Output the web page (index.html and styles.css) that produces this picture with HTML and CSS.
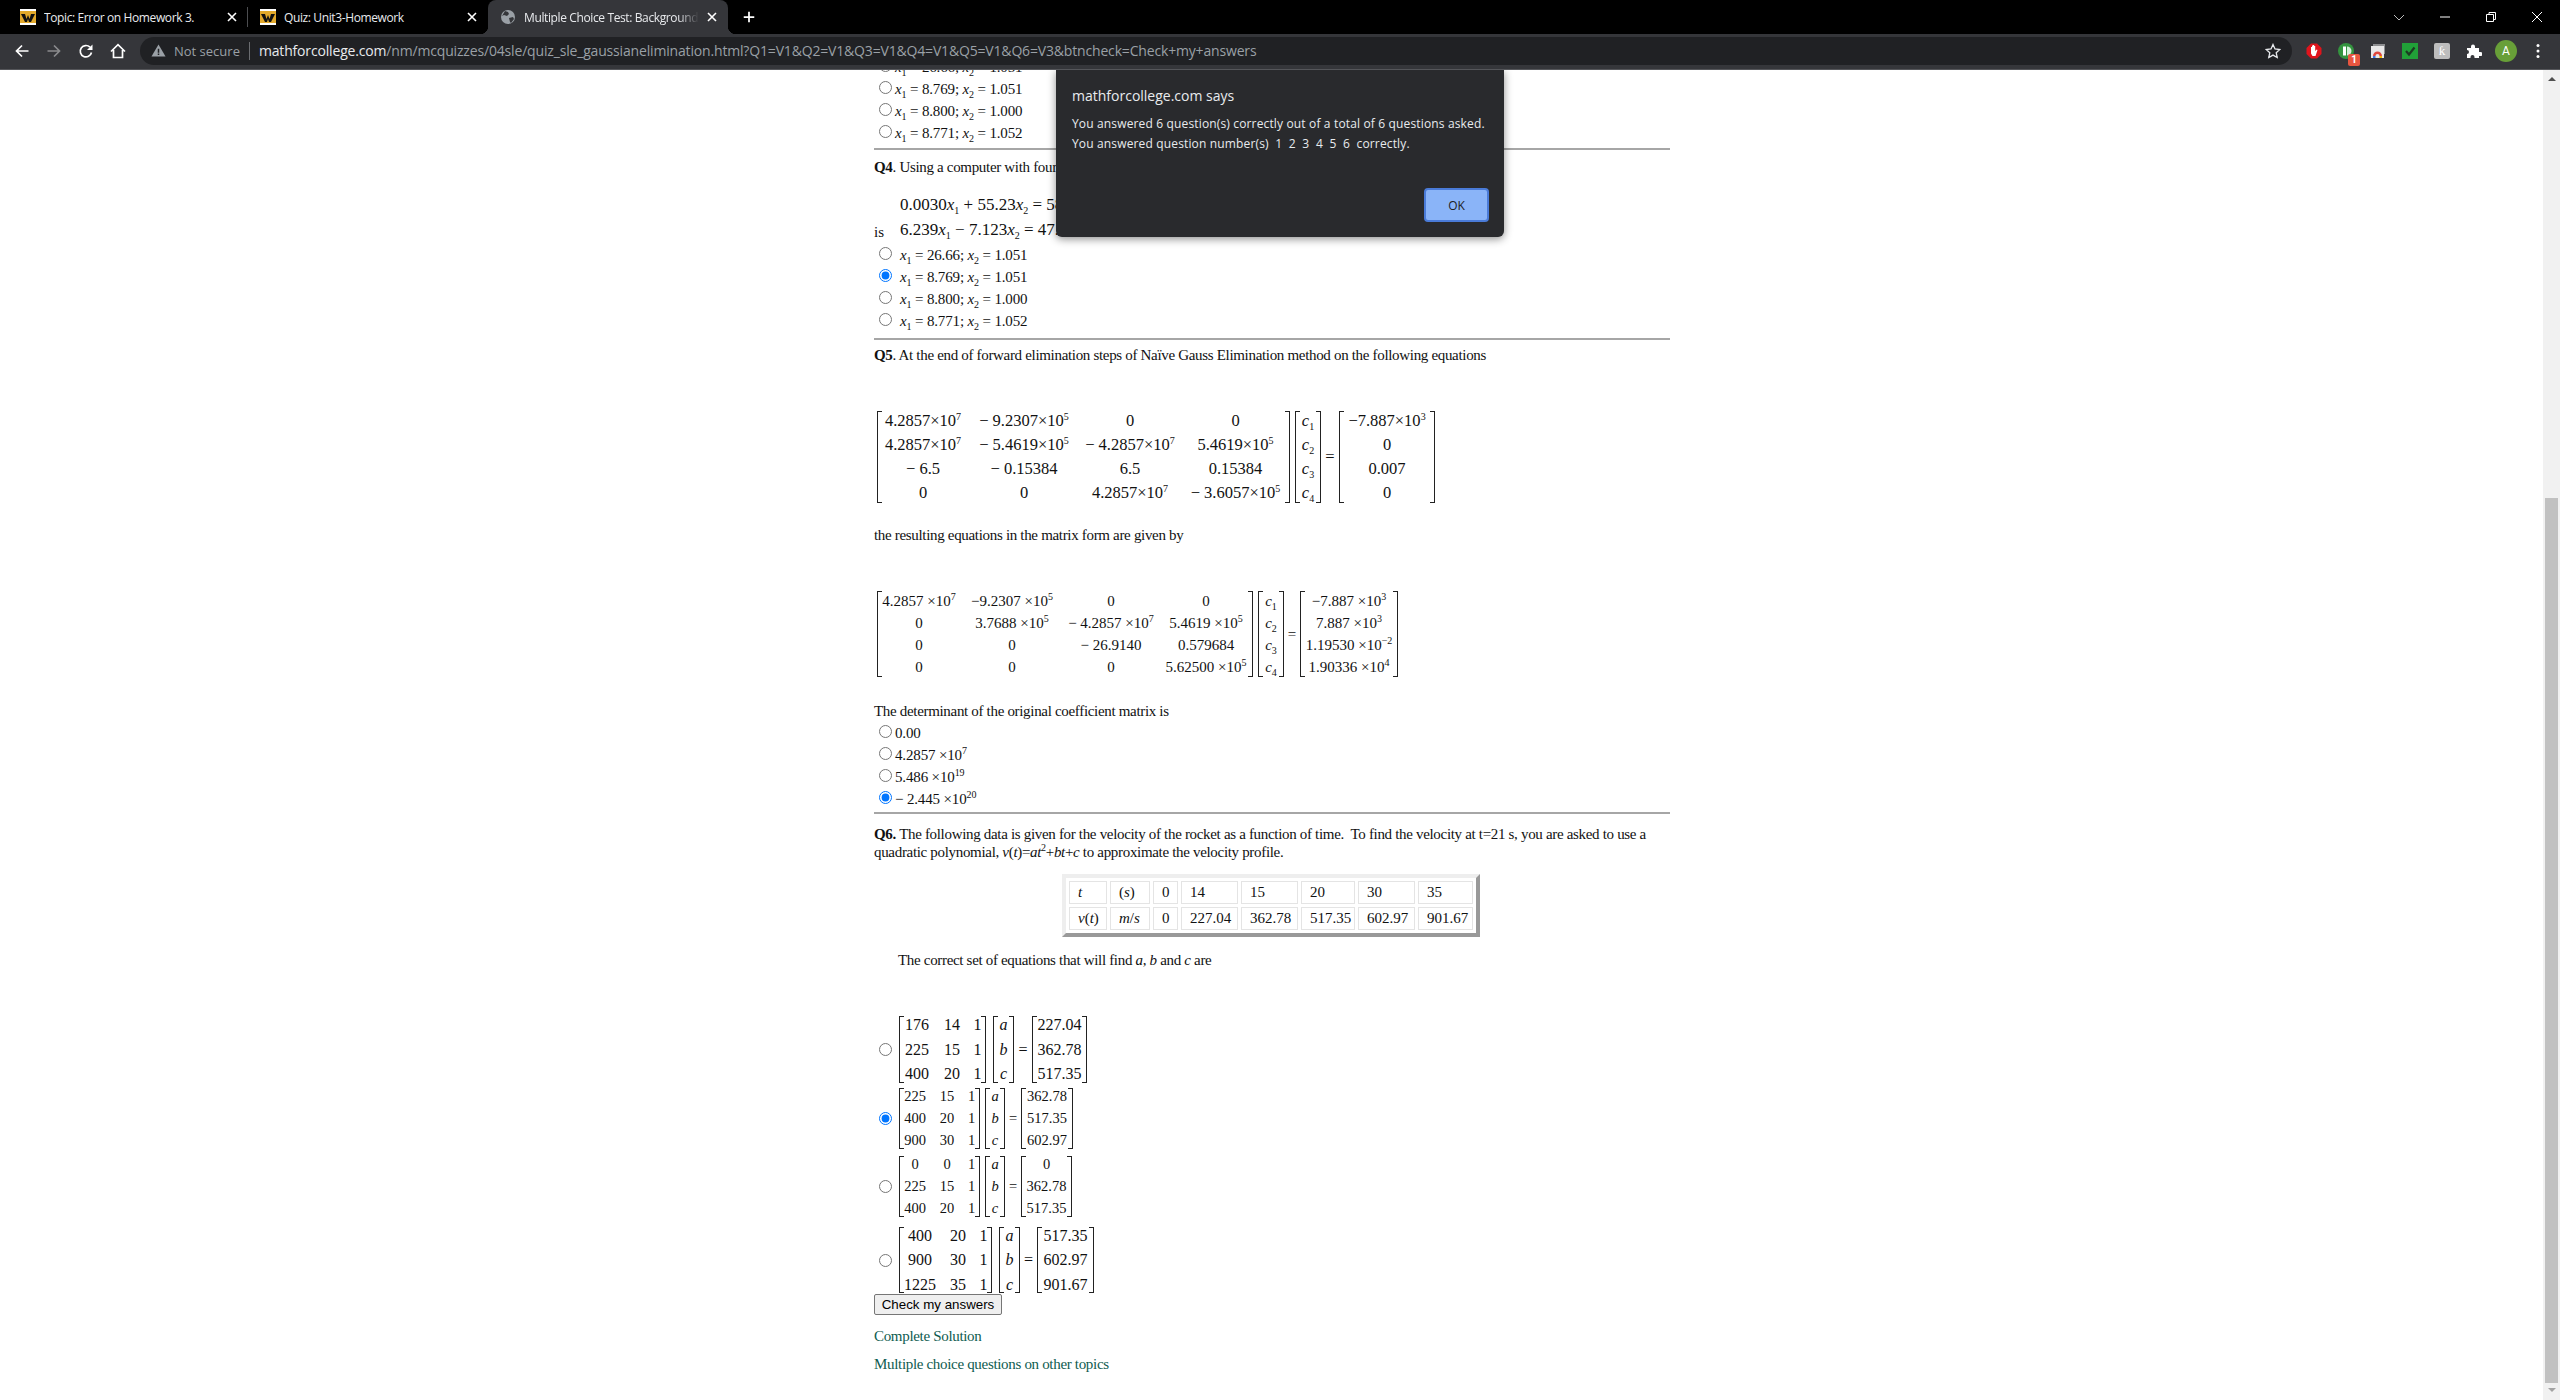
FILE: index.html
```html
<!DOCTYPE html>
<html lang="en">
<head>
    <meta charset="UTF-8">
    <title>Multiple Choice Test: Background</title>
    <link rel="stylesheet" href="styles.css">
</head>
<body>
    <div class="tabstrip">
        <div class="tab tab-sep">
            <svg class="favicon" viewBox="0 0 16 16"><rect width="16" height="16" fill="#fff"/><rect y="2" width="16" height="12" fill="#e2a92b"/><path d="M1 5h4l1.5 5L8 6l1.5 4L11 5h4l-4 8H9L8 10l-1 3H5z" fill="#111"/></svg>
            <span class="tab-title">Topic: Error on Homework 3.</span>
            <svg class="tab-x" viewBox="0 0 16 16"><path d="M4 4l8 8M12 4l-8 8" stroke="#fff" stroke-width="1.6"/></svg>
        </div>
        <div class="tab">
            <svg class="favicon" viewBox="0 0 16 16"><rect width="16" height="16" fill="#fff"/><rect y="2" width="16" height="12" fill="#e2a92b"/><path d="M1 5h4l1.5 5L8 6l1.5 4L11 5h4l-4 8H9L8 10l-1 3H5z" fill="#111"/></svg>
            <span class="tab-title">Quiz: Unit3-Homework</span>
            <svg class="tab-x" viewBox="0 0 16 16"><path d="M4 4l8 8M12 4l-8 8" stroke="#fff" stroke-width="1.6"/></svg>
        </div>
        <div class="tab tab-active">
            <svg class="favicon" viewBox="0 0 16 16"><circle cx="8" cy="8" r="7" fill="#9aa0a6"/><path d="M5 2l3 1 1 2-2 2-3-1-2 1zM9 9l4-1 1 2-3 4-1-1z" fill="#35363a"/></svg>
            <span class="tab-title tab-fade">Multiple Choice Test: Background of the method</span>
            <svg class="tab-x" viewBox="0 0 16 16"><path d="M4 4l8 8M12 4l-8 8" stroke="#fff" stroke-width="1.6"/></svg>
        </div>
        <svg class="new-tab" viewBox="0 0 16 16"><path d="M8 2v12M2 8h12" stroke="#fff" stroke-width="2"/></svg>
        <div class="win-controls">
            <svg class="win-btn" viewBox="0 0 16 16"><path d="M3 6l5 5 5-5" fill="none" stroke="#bbb" stroke-width="1"/></svg>
            <svg class="win-btn" viewBox="0 0 16 16"><path d="M3 8h10" stroke="#fff" stroke-width="1"/></svg>
            <svg class="win-btn" viewBox="0 0 16 16"><path d="M3.5 5.500h7v7h-7zM6 5.500V3.500h6.500v7h-2" fill="none" stroke="#fff" stroke-width="1"/></svg>
            <svg class="win-btn" viewBox="0 0 16 16"><path d="M3 3l10 10M13 3L3 13" stroke="#fff" stroke-width="1"/></svg>
        </div>
    </div>

    <div class="toolbar">
        <svg class="tool" viewBox="0 0 16 16"><path d="M14.500 8H2.500M8 2.500L2.500 8 8 13.500" fill="none" stroke="#fff" stroke-width="1.700"/></svg>
        <svg class="tool" viewBox="0 0 16 16"><path d="M1.500 8h12M8 2.500L13.500 8 8 13.500" fill="none" stroke="#8a8b8d" stroke-width="1.700"/></svg>
        <svg class="tool" viewBox="0 0 16 16"><path d="M13.500 9.500A5.700 5.700 0 1 1 12 4.200" fill="none" stroke="#fff" stroke-width="1.700"/><path d="M14.500 1.500v5.500H9z" fill="#fff"/></svg>
        <svg class="tool" viewBox="0 0 16 16"><path d="M1 8.500L8 1.700l7 6.800M3.500 7v7.500h9V7" fill="none" stroke="#fff" stroke-width="1.700"/></svg>
        <div class="omnibox">
            <svg class="omni-warn" viewBox="0 0 16 16"><path d="M8 1.500L15.500 14.500H.5z" fill="#9aa0a6"/><path d="M7.200 6h1.600v4.500H7.200zM7.200 11.300h1.600v1.600H7.200z" fill="#202124"/></svg>
            <span class="omni-note">Not secure</span>
            <span class="omni-sep"></span>
            <span class="omni-url"><b class="omni-host">mathforcollege.com</b>/nm/mcquizzes/04sle/quiz_sle_gaussianelimination.html?Q1=V1&amp;Q2=V1&amp;Q3=V1&amp;Q4=V1&amp;Q5=V1&amp;Q6=V3&amp;btncheck=Check+my+answers</span>
            <svg class="omni-star" viewBox="0 0 16 16"><path d="M8 1.500l2 4.500 4.800.5-3.600 3.200 1 4.800L8 12.100l-4.200 2.400 1-4.800L1.200 6.500 6 6z" fill="none" stroke="#e8eaed" stroke-width="1.300"/></svg>
        </div>
        <div class="ext-row">
            <svg class="ext" viewBox="0 0 16 16"><path d="M5 .5h6L15.500 5v6L11 15.500H5L.5 11V5z" fill="#e0141c"/><path d="M5 7V4h1v3-4.500h1V7 2h1.200v5-4h1v5l1.500-1.500.8.600L9.500 13H6.500L5 10.500z" fill="#fff"/></svg>
            <span class="ext ext-badged">
                <svg class="ext" viewBox="0 0 16 16"><circle cx="8" cy="8" r="8" fill="#34943f"/><path d="M5 3.500h3v9H5z" fill="#fff"/><path d="M9 3.500a4.500 4.500 0 0 1 0 9z" fill="#d5eed8"/></svg>
                <span class="badge">1</span>
            </span>
            <svg class="ext" viewBox="0 0 16 16"><rect x="3" y="1" width="12" height="10" fill="#8d8e90"/><rect x="1" y="3" width="13" height="12" fill="#e8e8e8"/><path d="M3 13a4.500 4.500 0 0 1 9 0H9.500a2 2 0 0 0-4 0z" fill="#e0483c"/><path d="M3 13h2.500v2H3z" fill="#3b78e7"/><path d="M9.500 13H12v2H9.500z" fill="#f4b400"/></svg>
            <svg class="ext" viewBox="0 0 16 16"><rect width="16" height="16" fill="#21a038"/><path d="M4 8l3 3.500L12.500 4.500" fill="none" stroke="#1c3b22" stroke-width="2.200"/></svg>
            <span class="ext ext-r">ƙ</span>
            <svg class="ext" viewBox="0 0 16 16"><path d="M1 5h4V3.500a2 2 0 0 1 4 0V5h4v4h1.500a2 2 0 0 1 0 4H13v2H8.500v-1a2 2 0 0 0-4 0v1H1v-4a2 2 0 0 0 0-4z" fill="#fff"/></svg>
            <span class="avatar">A</span>
            <svg class="ext" viewBox="0 0 16 16"><circle cx="8" cy="2.500" r="1.500" fill="#fff"/><circle cx="8" cy="8" r="1.500" fill="#fff"/><circle cx="8" cy="13.500" r="1.500" fill="#fff"/></svg>
        </div>
    </div>

    <div class="viewport">
        <div class="page">
            <div class="doc">
                <div class="opt opt-narrow"><input type="radio" name="q3"><span class="ans"><i>x</i><sub>1</sub> = 26.66; <i>x</i><sub>2</sub> = 1.051</span></div>
                <div class="opt opt-narrow"><input type="radio" name="q3"><span class="ans"><i>x</i><sub>1</sub> = 8.769; <i>x</i><sub>2</sub> = 1.051</span></div>
                <div class="opt opt-narrow"><input type="radio" name="q3"><span class="ans"><i>x</i><sub>1</sub> = 8.800; <i>x</i><sub>2</sub> = 1.000</span></div>
                <div class="opt opt-narrow"><input type="radio" name="q3"><span class="ans"><i>x</i><sub>1</sub> = 8.771; <i>x</i><sub>2</sub> = 1.052</span></div>
                <hr class="rule rule-q4">

                <p class="line q4-head"><b>Q4</b>. Using a computer with four significant digits with chopping, the Naïve Gauss elimination solution to</p>
                <div class="q4-system">
                    <span class="is">is</span>
                    <div class="sys">
                        <div class="sys-row">0.0030<i>x</i><sub>1</sub> + 55.23<i>x</i><sub>2</sub> = 58.12</div>
                        <div class="sys-row">6.239<i>x</i><sub>1</sub> − 7.123<i>x</i><sub>2</sub> = 47.23</div>
                    </div>
                </div>
                <div class="opts-q4">
                    <div class="opt"><input type="radio" name="q4"><span class="ans"><i>x</i><sub>1</sub> = 26.66; <i>x</i><sub>2</sub> = 1.051</span></div>
                    <div class="opt"><input type="radio" name="q4" checked><span class="ans"><i>x</i><sub>1</sub> = 8.769; <i>x</i><sub>2</sub> = 1.051</span></div>
                    <div class="opt"><input type="radio" name="q4"><span class="ans"><i>x</i><sub>1</sub> = 8.800; <i>x</i><sub>2</sub> = 1.000</span></div>
                    <div class="opt"><input type="radio" name="q4"><span class="ans"><i>x</i><sub>1</sub> = 8.771; <i>x</i><sub>2</sub> = 1.052</span></div>
                </div>
                <hr class="rule rule-q5">

                <p class="line q5-head"><b>Q5</b>. At the end of forward elimination steps of Naïve Gauss Elimination method on the following equations</p>
                <div class="eq eq-a">
                    <div class="br mat">
                        <span>4.2857×10<sup>7</sup></span><span>− 9.2307×10<sup>5</sup></span><span>0</span><span>0</span>
                        <span>4.2857×10<sup>7</sup></span><span>− 5.4619×10<sup>5</sup></span><span>− 4.2857×10<sup>7</sup></span><span>5.4619×10<sup>5</sup></span>
                        <span>− 6.5</span><span>− 0.15384</span><span>6.5</span><span>0.15384</span>
                        <span>0</span><span>0</span><span>4.2857×10<sup>7</sup></span><span>− 3.6057×10<sup>5</sup></span>
                    </div>
                    <div class="br vec"><span><i>c</i><sub>1</sub></span><span><i>c</i><sub>2</sub></span><span><i>c</i><sub>3</sub></span><span><i>c</i><sub>4</sub></span></div>
                    <span class="eq-sign">=</span>
                    <div class="br rhs"><span>−7.887×10<sup>3</sup></span><span>0</span><span>0.007</span><span>0</span></div>
                </div>

                <p class="line res-head">the resulting equations in the matrix form are given by</p>
                <div class="eq eq-b">
                    <div class="br mat">
                        <span>4.2857 ×10<sup>7</sup></span><span>−9.2307 ×10<sup>5</sup></span><span>0</span><span>0</span>
                        <span>0</span><span>3.7688 ×10<sup>5</sup></span><span>− 4.2857 ×10<sup>7</sup></span><span>5.4619 ×10<sup>5</sup></span>
                        <span>0</span><span>0</span><span>− 26.9140</span><span>0.579684</span>
                        <span>0</span><span>0</span><span>0</span><span>5.62500 ×10<sup>5</sup></span>
                    </div>
                    <div class="br vec"><span><i>c</i><sub>1</sub></span><span><i>c</i><sub>2</sub></span><span><i>c</i><sub>3</sub></span><span><i>c</i><sub>4</sub></span></div>
                    <span class="eq-sign">=</span>
                    <div class="br rhs"><span>−7.887 ×10<sup>3</sup></span><span>7.887 ×10<sup>3</sup></span><span>1.19530 ×10<sup>−2</sup></span><span>1.90336 ×10<sup>4</sup></span></div>
                </div>

                <p class="line det-head">The determinant of the original coefficient matrix is</p>
                <div class="opt opt-narrow opt-det"><input type="radio" name="q5"><span class="ans">0.00</span></div>
                <div class="opt opt-narrow"><input type="radio" name="q5"><span class="ans">4.2857 ×10<sup>7</sup></span></div>
                <div class="opt opt-narrow"><input type="radio" name="q5"><span class="ans">5.486 ×10<sup>19</sup></span></div>
                <div class="opt opt-narrow"><input type="radio" name="q5" checked><span class="ans">− 2.445 ×10<sup>20</sup></span></div>
                <hr class="rule rule-q6">

                <p class="q6-head"><b>Q6.</b> The following data is given for the velocity of the rocket as a function of time.&nbsp; To find the velocity at t=21 s, you are asked to use a quadratic polynomial, <i>v</i>(<i>t</i>)=<i>at</i><sup>2</sup>+<i>bt</i>+<i>c</i> to approximate the velocity profile.</p>
                <table class="data">
                    <tr><td><i>t</i></td><td>(<i>s</i>)</td><td>0</td><td>14</td><td>15</td><td>20</td><td>30</td><td>35</td></tr>
                    <tr><td><i>v</i>(<i>t</i>)</td><td><i>m</i>/<i>s</i></td><td>0</td><td>227.04</td><td>362.78</td><td>517.35</td><td>602.97</td><td>901.67</td></tr>
                </table>
                <p class="line set-head">The correct set of equations that will find <i>a</i>, <i>b</i> and <i>c</i> are</p>

                <div class="eq eq-big eq-1">
                    <input type="radio" name="q6">
                    <div class="br mat"><span>176</span><span>14</span><span>1</span><span>225</span><span>15</span><span>1</span><span>400</span><span>20</span><span>1</span></div>
                    <div class="br vec"><i>a</i><i>b</i><i>c</i></div>
                    <span class="eq-sign">=</span>
                    <div class="br rhs"><span>227.04</span><span>362.78</span><span>517.35</span></div>
                </div>
                <div class="eq eq-small eq-2">
                    <input type="radio" name="q6" checked>
                    <div class="br mat"><span>225</span><span>15</span><span>1</span><span>400</span><span>20</span><span>1</span><span>900</span><span>30</span><span>1</span></div>
                    <div class="br vec"><i>a</i><i>b</i><i>c</i></div>
                    <span class="eq-sign">=</span>
                    <div class="br rhs"><span>362.78</span><span>517.35</span><span>602.97</span></div>
                </div>
                <div class="eq eq-small eq-3">
                    <input type="radio" name="q6">
                    <div class="br mat"><span>0</span><span>0</span><span>1</span><span>225</span><span>15</span><span>1</span><span>400</span><span>20</span><span>1</span></div>
                    <div class="br vec"><i>a</i><i>b</i><i>c</i></div>
                    <span class="eq-sign">=</span>
                    <div class="br rhs"><span>0</span><span>362.78</span><span>517.35</span></div>
                </div>
                <div class="eq eq-big eq-4">
                    <input type="radio" name="q6">
                    <div class="br mat"><span>400</span><span>20</span><span>1</span><span>900</span><span>30</span><span>1</span><span>1225</span><span>35</span><span>1</span></div>
                    <div class="br vec"><i>a</i><i>b</i><i>c</i></div>
                    <span class="eq-sign">=</span>
                    <div class="br rhs"><span>517.35</span><span>602.97</span><span>901.67</span></div>
                </div>

                <button class="check">Check my answers</button>
                <p class="line link-first"><a href="#">Complete Solution</a></p>
                <p class="line link-next"><a href="#">Multiple choice questions on other topics</a></p>
            </div>
        </div>

        <div class="scrollbar">
            <span class="arrow-up"></span>
            <span class="thumb"></span>
            <span class="arrow-down"></span>
        </div>

        <div class="dialog">
            <h4 class="dialog-title">mathforcollege.com says</h4>
            <p class="dialog-text">You answered 6 question(s) correctly out of a total of 6 questions asked.</p>
            <p class="dialog-text">You answered question number(s)&nbsp; 1&nbsp; 2&nbsp; 3&nbsp; 4&nbsp; 5&nbsp; 6&nbsp; correctly.</p>
            <div class="dialog-actions"><button class="dialog-ok">OK</button></div>
        </div>
    </div>
</body>
</html>
```

FILE: styles.css
```css
html, body {
    margin: 0;
    height: 1400px;
    overflow: hidden;
}
body {
    display: flex;
    flex-direction: column;
    background: #fff;
    color: #111;
    font-family: "Liberation Serif", serif;
    font-size: 15px;
}

/* browser chrome */
.tabstrip {
    display: flex;
    align-items: center;
    height: 34px;
    padding-left: 8px;
    background: #000;
    font-family: "Open Sans", sans-serif;
    font-size: 12px;
    color: #e8eaed;
}
.tab {
    position: relative;
    display: flex;
    align-items: center;
    box-sizing: border-box;
    width: 240px;
    height: 34px;
    padding: 0 8px 0 12px;
}
.tab-sep::after {
    content: "";
    position: absolute;
    right: 0;
    top: 7px;
    height: 20px;
    width: 1px;
    background: #4c4d50;
}
.tab-active {
    background: #35363a;
    border-radius: 8px 8px 0 0;
}
.tab-active::before,
.tab-active::after {
    content: "";
    position: absolute;
    bottom: 0;
    width: 8px;
    height: 8px;
}
.tab-active::before {
    left: -8px;
    background: radial-gradient(circle at 0 0, #000 8px, #35363a 8.5px);
}
.tab-active::after {
    right: -8px;
    background: radial-gradient(circle at 100% 0, #000 8px, #35363a 8.5px);
}
.favicon {
    width: 16px;
    height: 16px;
    flex: none;
    margin-right: 8px;
}
.tab-title {
    flex: 1;
    white-space: nowrap;
    overflow: hidden;
    letter-spacing: -0.38px;
}
.tab-fade {
    -webkit-mask-image: linear-gradient(to right, #000 88%, transparent);
    mask-image: linear-gradient(to right, #000 88%, transparent);
}
.tab-x {
    width: 16px;
    height: 16px;
    flex: none;
    margin-left: 5px;
}
.new-tab {
    width: 14px;
    height: 14px;
    margin-left: 14px;
}
.win-controls {
    display: flex;
    align-items: center;
    gap: 30px;
    margin-left: auto;
    padding-right: 15px;
}
.win-btn {
    width: 16px;
    height: 16px;
}

.toolbar {
    display: flex;
    align-items: center;
    box-sizing: border-box;
    height: 36px;
    padding: 0 6px 2px;
    background: #35363a;
    border-bottom: 1px solid #55565a;
}
.tool {
    width: 16px;
    height: 16px;
    padding: 0 8px;
    flex: none;
}
.omnibox {
    flex: 1;
    display: flex;
    align-items: center;
    height: 28px;
    margin: 0 6px;
    padding: 0 11px;
    background: #202124;
    border-radius: 14px;
    font-family: "Open Sans", sans-serif;
    font-size: 13px;
    color: #9aa0a6;
}
.omni-warn {
    width: 15px;
    height: 15px;
    flex: none;
}
.omni-note {
    margin-left: 8px;
}
.omni-sep {
    width: 1px;
    height: 18px;
    margin: 0 9px;
    background: #6a6c70;
}
.omni-url {
    font-size: 14px;
    white-space: nowrap;
    letter-spacing: -0.17px;
}
.omni-host {
    font-weight: normal;
    color: #e8eaed;
}
.omni-star {
    width: 16px;
    height: 16px;
    margin-left: auto;
}
.ext-row {
    display: flex;
    align-items: center;
}
.ext {
    position: relative;
    display: block;
    box-sizing: content-box;
    width: 16px;
    height: 16px;
    margin: 0 8px;
    flex: none;
}
.ext-badged > .ext {
    margin: 0;
}
.badge {
    position: absolute;
    left: 10px;
    top: 11px;
    width: 12px;
    height: 12px;
    background: #e8553f;
    border-radius: 2px;
    color: #fff;
    font: bold 10px/12px "Roboto", sans-serif;
    text-align: center;
}
.ext-r {
    background: #bdbdbd;
    border-radius: 2px;
    color: #fff;
    font: 13px/16px "Liberation Serif", serif;
    text-align: center;
}
.avatar {
    width: 22px;
    height: 22px;
    margin: 0 5px;
    border-radius: 50%;
    background: #689f38;
    color: #fff;
    font: 12px/22px "Roboto", sans-serif;
    text-align: center;
    flex: none;
}

/* page */
.viewport {
    position: relative;
    flex: 1;
    display: flex;
    min-height: 0;
    overflow: hidden;
}
.page {
    flex: 1;
    overflow: hidden;
}
.doc {
    width: 796px;
    margin: -14px 0 0 874px;
}
.line {
    height: 20px;
    margin: 0;
    line-height: 20px;
    white-space: nowrap;
    letter-spacing: -0.32px;
}
.rule {
    height: 2px;
    margin: 0;
    border: 0;
    background: #a6a6a6;
}
.rule-q4 { margin-top: 4px; }
.rule-q5 { margin-top: 6px; }
.rule-q6 { margin-top: 2px; }
.q4-head { margin-top: 7px; }
.q4-system {
    display: flex;
    align-items: flex-end;
    height: 50px;
    margin-top: 15px;
}
.is {
    width: 26px;
    line-height: 20px;
}
.sys-row {
    height: 25px;
    line-height: 25px;
    font-size: 17px;
    white-space: nowrap;
}
.opts-q4 { margin-top: 2px; }
.q5-head { margin-top: 5px; }
.res-head { margin-top: 22px; }
.det-head { margin-top: 24px; }
.opt-det { margin-top: 1px; }
.q6-head {
    margin: 11px 0 0;
    line-height: 18px;
    letter-spacing: -0.32px;
}
.set-head { margin: 13px 0 0 24px; }
.link-first { margin-top: 11px; }
.link-next { margin-top: 8px; }
a {
    color: #0f5c50;
    text-decoration: none;
}

/* answer rows */
.opt {
    display: flex;
    align-items: center;
    height: 22px;
}
input[type="radio"] {
    flex: none;
    width: 13px;
    height: 13px;
    margin: 0 0 0 5px;
}
.opt input[type="radio"] {
    margin-bottom: 3px;
}
.ans {
    margin-left: 8px;
    white-space: nowrap;
    letter-spacing: -0.15px;
}
.opt-narrow .ans { margin-left: 3px; }
sub, sup {
    font-size: 10px;
    line-height: 0;
}

/* matrices */
.eq {
    display: flex;
    align-items: center;
}
.br {
    position: relative;
    box-sizing: border-box;
    flex: none;
    white-space: nowrap;
}
.br::before,
.br::after {
    content: "";
    position: absolute;
    top: 0;
    bottom: 0;
    width: 4px;
    border: solid #222;
    border-width: 1.500px 0;
}
.br::before {
    left: 0;
    border-left-width: 1.500px;
}
.br::after {
    right: 0;
    border-right-width: 1.500px;
}
.mat,
.rhs,
.vec {
    display: grid;
    justify-items: center;
    align-items: center;
    align-content: center;
}
.eq-sign {
    flex: none;
    text-align: center;
}
.eq-a { height: 92px; margin-top: 46px; font-size: 16.500px; }
.eq-a .br { height: 92px; grid-auto-rows: 23.700px; }
.eq-a .mat {
    width: 413px;
    margin-left: 3px;
    grid-template-columns: 92px 110px 102px 109px;
}
.eq-a .vec,
.eq-b .vec {
    width: 26px;
    margin-left: 5px;
}
.eq-a .eq-sign { width: 18px; }
.eq-a .rhs { width: 96px; }

.eq-b { height: 86px; margin-top: 46px; font-size: 15px; }
.eq-b .br { height: 86px; grid-auto-rows: 22px; }
.eq-b .mat {
    width: 376px;
    margin-left: 3px;
    grid-template-columns: 84px 102px 96px 94px;
}
.eq-b .eq-sign { width: 16px; }
.eq-b .rhs { width: 98px; }

.eq-big { font-size: 16px; }
.eq-small { font-size: 14.500px; }
.eq-1 .mat, .eq-2 .mat, .eq-3 .mat, .eq-4 .mat { margin-left: 7px; }
.eq-1 { margin-top: 46px; }
.eq-1 .br { height: 67px; grid-auto-rows: 24.800px; }
.eq-1 .mat { width: 87px; grid-template-columns: 36px 34px 17px; }
.eq-1 .vec { width: 21px; margin-left: 7px; }
.eq-1 .eq-sign { width: 18px; }
.eq-1 .rhs { width: 55px; }

.eq-small .br { height: 61px; grid-auto-rows: 22px; }
.eq-small .vec { width: 20px; margin-left: 5px; }
.eq-small .mat { width: 81px; grid-template-columns: 32px 32px 17px; }
.eq-small .eq-sign { width: 16px; }
.eq-2 { margin-top: 5px; }
.eq-2 .rhs { width: 52px; }
.eq-3 { margin-top: 7px; }
.eq-3 .rhs { width: 51px; }

.eq-4 { margin-top: 10px; }
.eq-4 .br { height: 66px; grid-auto-rows: 24.500px; }
.eq-4 .vec { width: 21px; margin-left: 7px; }
.eq-4 .mat { width: 93px; grid-template-columns: 42px 34px 17px; }
.eq-4 .eq-sign { width: 17px; }
.eq-4 .rhs { width: 57px; }

/* velocity table */
.data {
    margin: 13px 0 0 188px;
    width: 418px;
    height: 63px;
    box-sizing: border-box;
    table-layout: fixed;
    border-collapse: separate;
    border-spacing: 3px;
    border: 4px solid;
    border-color: #eeeeee #999999 #999999 #eeeeee;
}
.data td {
    box-sizing: border-box;
    height: 23px;
    padding: 0 0 0 8px;
    border: 1px solid #e4e4e4;
    white-space: nowrap;
}
.data td:nth-child(1) { width: 38px; }
.data td:nth-child(2) { width: 40px; }
.data td:nth-child(3) { width: 25px; }
.data td:nth-child(4) { width: 57px; }
.data td:nth-child(5) { width: 57px; }
.data td:nth-child(6) { width: 54px; }
.data td:nth-child(7) { width: 57px; }
.data td:nth-child(8) { width: 55px; }

.check {
    display: block;
    box-sizing: border-box;
    width: 128px;
    height: 21px;
    margin: 1px 0 0;
    padding: 0;
    border: 1px solid #767676;
    border-radius: 2px;
    background: #efefef;
    color: #000;
    font: 13.330px "Liberation Sans", sans-serif;
}

/* scrollbar */
.scrollbar {
    display: flex;
    flex-direction: column;
    align-items: center;
    box-sizing: border-box;
    width: 17px;
    padding-top: 7px;
    background: #f1f1f1;
}
.arrow-up {
    border: 4px solid transparent;
    border-top: 0;
    border-bottom: 4px solid #505050;
}
.thumb {
    width: 13px;
    height: 885px;
    margin-top: 417px;
    background: #c1c1c1;
}
.arrow-down {
    margin-top: 5px;
    border: 4px solid transparent;
    border-bottom: 0;
    border-top: 4px solid #a3a3a3;
}

/* alert dialog */
.dialog {
    position: absolute;
    left: 1056px;
    top: 0;
    box-sizing: border-box;
    width: 448px;
    height: 167px;
    padding: 16px 16px 0;
    background: #292a2d;
    border-radius: 0 0 6px 6px;
    box-shadow: 0 2px 8px rgba(0, 0, 0, 0.45);
    font-family: "Open Sans", sans-serif;
    color: #e8eaed;
}
.dialog-title {
    margin: 0 0 8px;
    font-size: 14px;
    font-weight: normal;
    line-height: 20px;
}
.dialog-text {
    margin: 0;
    font-size: 12px;
    line-height: 20px;
    white-space: nowrap;
    letter-spacing: 0.15px;
}
.dialog-actions {
    display: flex;
    justify-content: flex-end;
    margin-top: 34px;
    margin-right: -1px;
}
.dialog-ok {
    box-sizing: border-box;
    width: 65px;
    height: 34px;
    padding: 0;
    border: 2px solid #4a7bd8;
    border-radius: 4px;
    background: #8ab4f8;
    color: #202124;
    font: 12px "Open Sans", sans-serif;
}
```
